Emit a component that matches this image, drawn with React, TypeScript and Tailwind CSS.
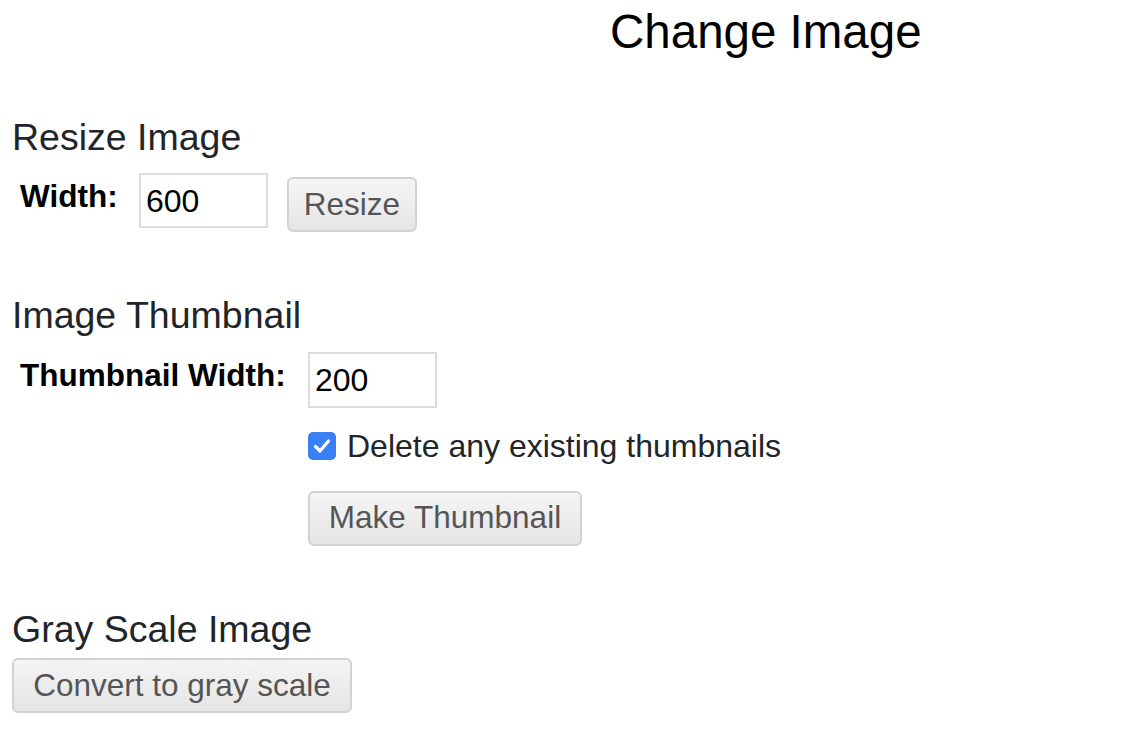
import React from "react";

const btn =
  "flex items-center justify-center h-[55px] border-2 border-[#d2d2d2] rounded-[6px] bg-gradient-to-b from-[#f5f5f5] to-[#e5e5e5] text-[#555555] text-[31.5px] leading-none";

export default function App() {
  return (
    <div className="min-h-[748px] bg-white font-['Liberation_Sans',Arial,sans-serif] pl-3 flex flex-col items-start">
      <h1 className="ml-[598px] mt-2 text-[47.5px] leading-none text-black font-normal whitespace-nowrap">
        Change Image
      </h1>

      <h2 className="mt-[63px] text-[37.5px] leading-none text-[#212529] font-normal">Resize Image</h2>
      <div className="mt-[17px] flex items-start">
        <div className="w-[127px] pl-2 pt-[8px] text-[31.5px] leading-none font-bold text-black">Width:</div>
        <div className="w-[129px] h-[55px] border-2 border-[#dcdcdc] pl-[5px] flex items-center text-[32px] leading-none text-black">
          600
        </div>
        <button className={`${btn} ml-[19px] mt-[4px] w-[130px]`}>Resize</button>
      </div>

      <h2 className="mt-[65px] text-[37.5px] leading-none text-[#212529] font-normal">Image Thumbnail</h2>
      <div className="mt-[17px] flex items-start">
        <div className="w-[296px] pl-2 pt-[8px] text-[31.5px] leading-none font-bold text-black whitespace-nowrap">
          Thumbnail Width:
        </div>
        <div className="flex flex-col items-start">
          <div className="w-[129px] h-[56px] border-2 border-[#dcdcdc] pl-[5px] flex items-center text-[32px] leading-none text-black">
            200
          </div>
          <div className="mt-[24px] flex items-center h-[28px]">
            <span className="w-[28px] h-[28px] rounded-[5px] bg-[#3b7ff5] flex items-center justify-center">
              <svg width="20" height="20" viewBox="0 0 20 20">
                <path d="M3.5 10.5 L8 15 L16.5 5" fill="none" stroke="white" strokeWidth="3.2" strokeLinecap="round" strokeLinejoin="round" />
              </svg>
            </span>
            <span className="ml-[11px] text-[32px] leading-none text-[#212529] whitespace-nowrap">
              Delete any existing thumbnails
            </span>
          </div>
          <button className={`${btn} mt-[31px] w-[274px]`}>Make Thumbnail</button>
        </div>
      </div>

      <h2 className="mt-[65px] text-[37.5px] leading-none text-[#212529] font-normal">Gray Scale Image</h2>
      <button className={`${btn} mt-[10px] w-[340px] h-[54px]`}>Convert to gray scale</button>
    </div>
  );
}
